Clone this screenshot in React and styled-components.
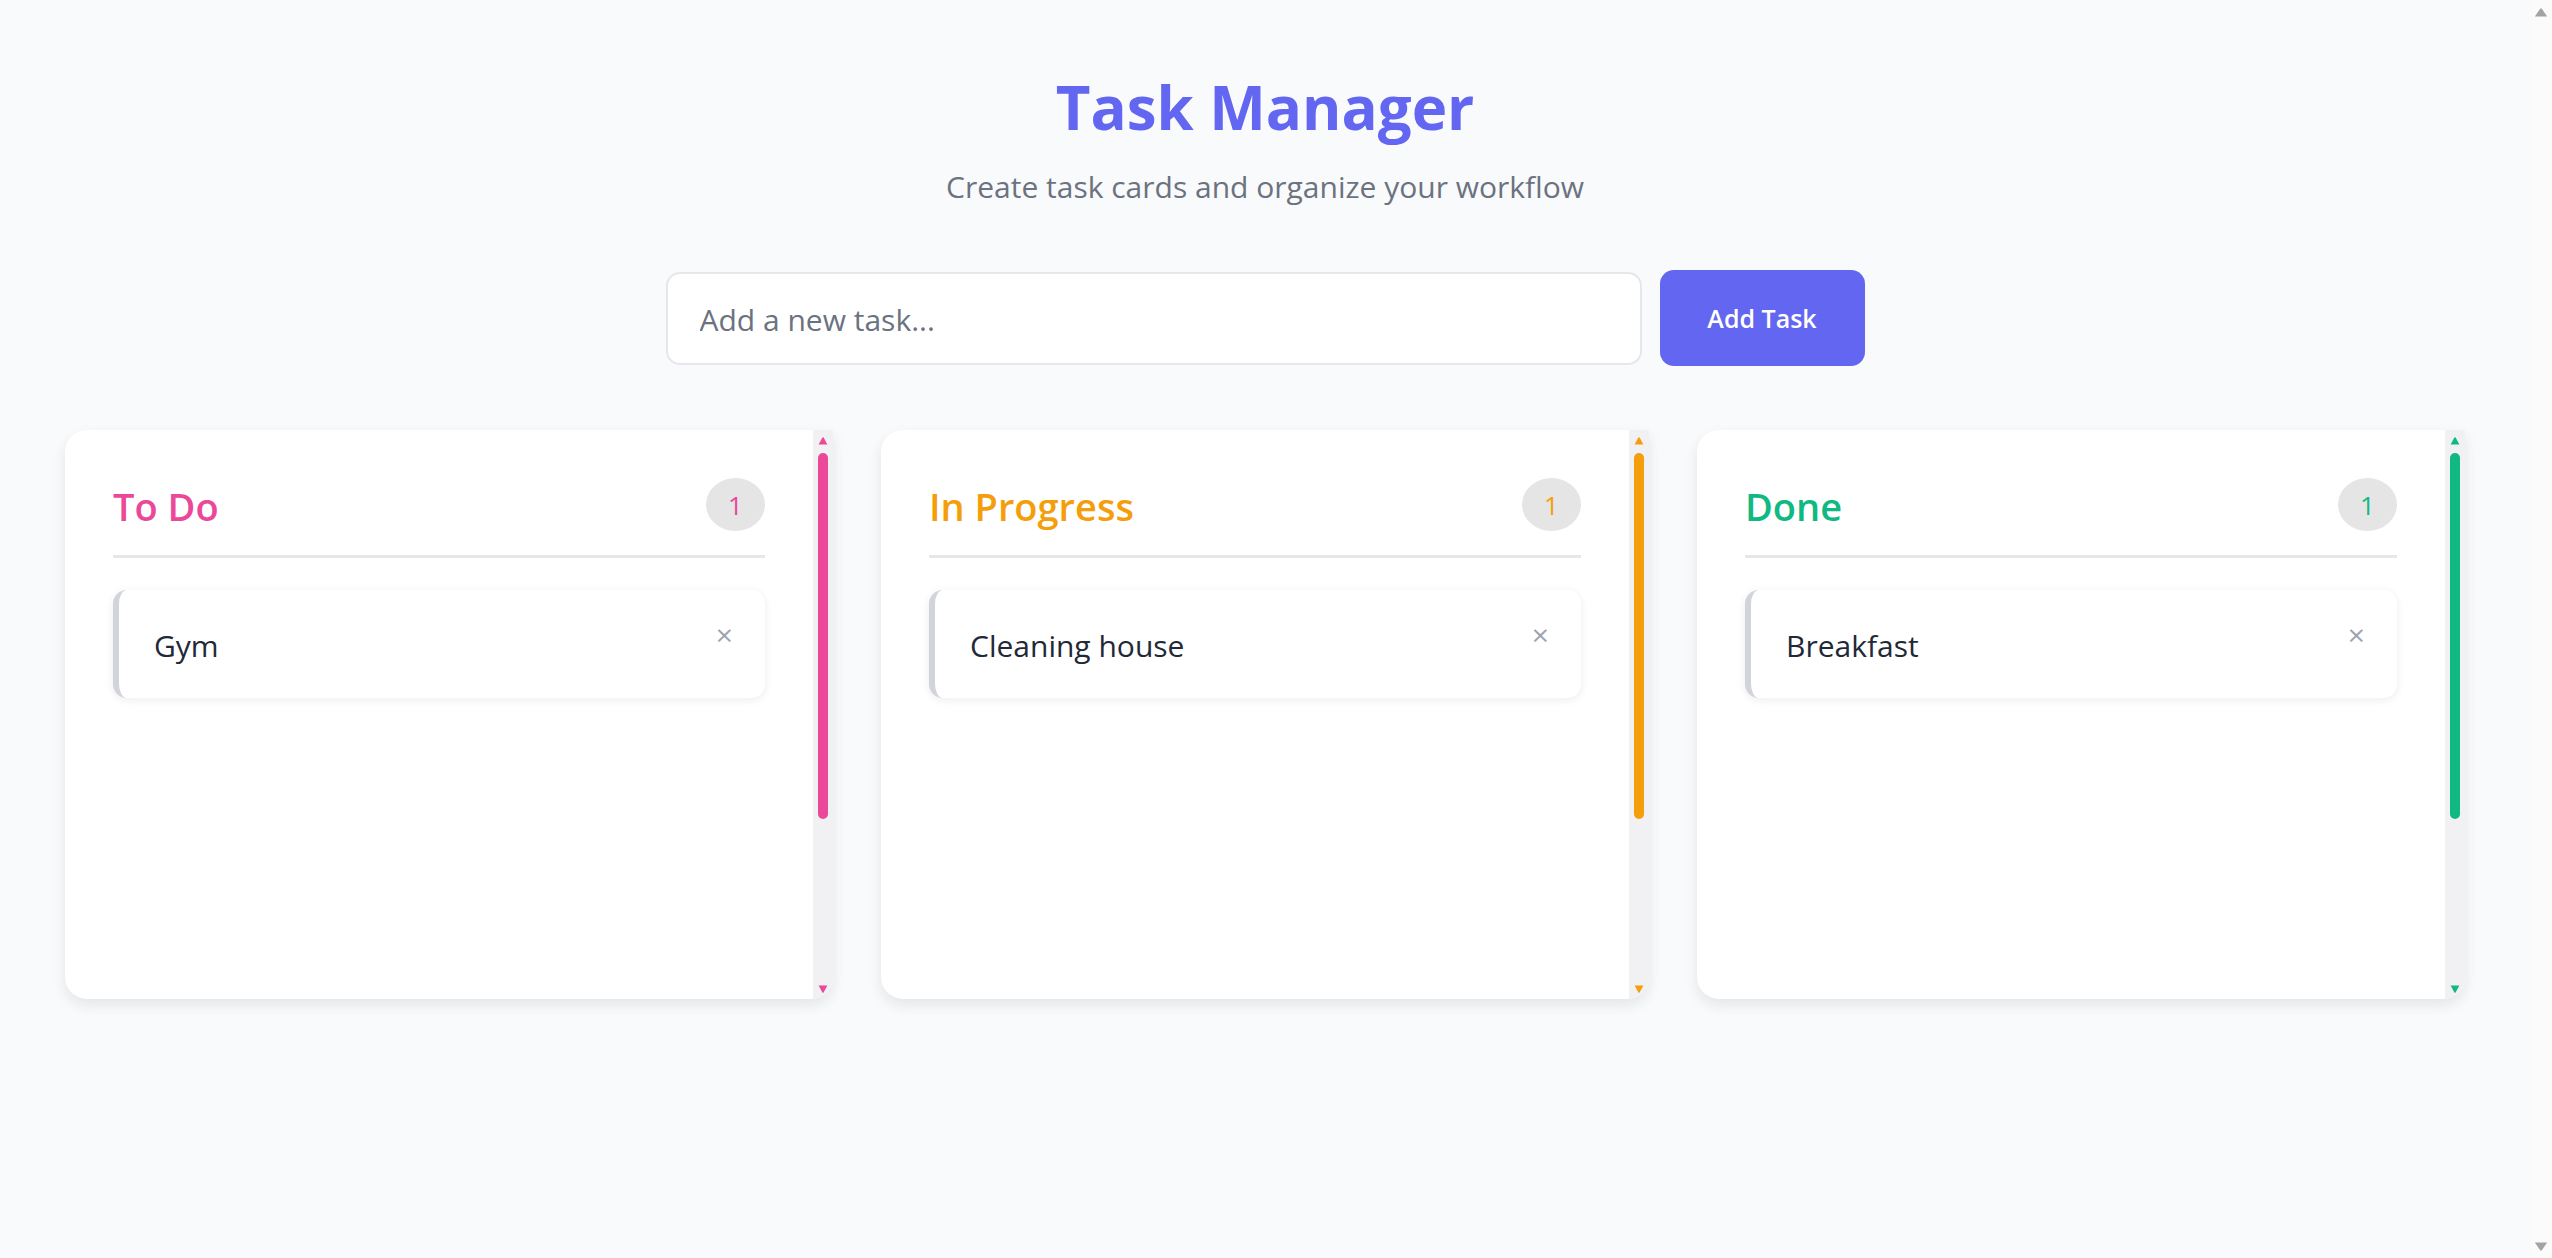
import React, { useState } from 'react'
import styled, { createGlobalStyle } from 'styled-components'

const GlobalStyle = createGlobalStyle`
  html, body {
    margin: 0;
    padding: 0;
    height: 100%;
    overflow: hidden;
  }
  body {
    background: #f9fafb;
    font-family: "Open Sans", "Noto Sans", sans-serif;
  }
  * { box-sizing: border-box; }
`

const Screen = styled.div`
  display: flex;
  height: 100vh;
`

const Page = styled.main`
  flex: 1;
  padding-top: 71px;
  display: flex;
  flex-direction: column;
  align-items: center;
`

const Title = styled.h1`
  margin: 0;
  font-size: 60px;
  line-height: 72px;
  font-weight: 700;
  color: #6366f1;
`

const Subtitle = styled.p`
  margin: 24px 0 0;
  font-size: 30px;
  line-height: 40px;
  color: #6b7280;
`

const AddForm = styled.form`
  margin-top: 63px;
  width: 1199px;
  display: flex;
  align-items: center;
  gap: 18px;
`

const TaskInput = styled.input`
  flex: 1;
  height: 93px;
  padding: 2px 32px 0;
  border: 2px solid #e5e7eb;
  border-radius: 14px;
  background: #fff;
  font-family: inherit;
  font-size: 30px;
  color: #1f2937;
  outline: none;

  &::placeholder {
    color: #6b7280;
  }
`

const AddButton = styled.button`
  width: 205px;
  height: 96px;
  border: none;
  border-radius: 14px;
  background: #6366f1;
  color: #fff;
  font-family: inherit;
  font-size: 25px;
  font-weight: 600;
  cursor: pointer;
`

const Board = styled.section`
  margin-top: 64px;
  width: 2400px;
  display: grid;
  grid-template-columns: repeat(3, 1fr);
  gap: 48px;
`

const Column = styled.div`
  height: 569px;
  display: flex;
  background: #fff;
  border-radius: 22px 0 22px 22px;
  box-shadow: 0 6px 14px rgba(17, 24, 39, 0.09);
  overflow: hidden;
`

const ColumnBody = styled.div`
  flex: 1;
  padding: 48px;
`

const ColumnHeader = styled.div`
  display: flex;
  align-items: center;
  justify-content: space-between;
  padding-bottom: 24px;
  border-bottom: 3px solid #e5e7eb;
`

const ColumnTitle = styled.h2`
  margin: 0;
  padding-top: 3px;
  font-size: 38px;
  line-height: 50px;
  font-weight: 600;
  color: ${p => p.$color};
`

const Count = styled.span`
  width: 59px;
  height: 53px;
  border-radius: 50%;
  background: #e5e5e5;
  display: flex;
  align-items: center;
  justify-content: center;
  font-size: 26px;
  color: ${p => p.$color};
`

const TaskList = styled.ul`
  list-style: none;
  margin: 32px 0 0;
  padding: 0;
`

const TaskCard = styled.li`
  height: 108px;
  display: flex;
  align-items: flex-start;
  justify-content: space-between;
  padding: 35px 28px 31px 35px;
  background: #fff;
  border-left: 6px solid #d1d5db;
  border-radius: 14px;
  box-shadow: 0 2px 8px rgba(17, 24, 39, 0.08);
`

const TaskText = styled.span`
  font-size: 30px;
  line-height: 42px;
  color: #1f2937;
`

const RemoveButton = styled.button`
  margin-top: -9px;
  padding: 4px;
  border: none;
  background: none;
  font-family: inherit;
  font-size: 30px;
  line-height: 1;
  color: #9ca3af;
  cursor: pointer;
`

const Rail = styled.div`
  width: 20px;
  display: flex;
  flex-direction: column;
  align-items: center;
  padding: 7px 0 6px;
  background: #f1f1f3;
  color: ${p => p.$color};
`

const Thumb = styled.div`
  margin-top: 8px;
  width: 10px;
  height: 366px;
  border-radius: 5px;
  background: ${p => p.$color};
`

const RailFill = styled.div`
  flex: 1;
`

const PageRail = styled.div`
  width: 22px;
  display: flex;
  flex-direction: column;
  justify-content: space-between;
  align-items: center;
  padding: 8px 0 7px;
  background: #fbfbfb;
  color: #a3a3a3;
`

const Arrow = ({ down, w = 10, h = 8 }) => (
  <svg width={w} height={h} viewBox="0 0 10 8" preserveAspectRatio="none">
    <path
      d={down ? 'M0.6 0.5 H9.4 L5.6 7.4 Q5 8 4.4 7.4 Z' : 'M0.6 7.5 H9.4 L5.6 0.6 Q5 0 4.4 0.6 Z'}
      fill="currentColor"
    />
  </svg>
)

const columns = [
  { id: 'todo', title: 'To Do', color: '#ec4899' },
  { id: 'progress', title: 'In Progress', color: '#f59e0b' },
  { id: 'done', title: 'Done', color: '#10b981' },
]

export default function App() {
  const [text, setText] = useState('')
  const [tasks, setTasks] = useState([
    { id: 1, text: 'Gym', status: 'todo' },
    { id: 2, text: 'Cleaning house', status: 'progress' },
    { id: 3, text: 'Breakfast', status: 'done' },
  ])

  const addTask = e => {
    e.preventDefault()
    if (!text.trim()) return
    setTasks([...tasks, { id: Date.now(), text: text.trim(), status: 'todo' }])
    setText('')
  }

  const removeTask = id => setTasks(tasks.filter(t => t.id !== id))

  return (
    <Screen>
      <GlobalStyle />
      <Page>
        <Title>Task Manager</Title>
        <Subtitle>Create task cards and organize your workflow</Subtitle>

        <AddForm onSubmit={addTask}>
          <TaskInput
            placeholder="Add a new task..."
            value={text}
            onChange={e => setText(e.target.value)}
          />
          <AddButton type="submit">Add Task</AddButton>
        </AddForm>

        <Board>
          {columns.map(col => {
            const list = tasks.filter(t => t.status === col.id)
            return (
              <Column key={col.id}>
                <ColumnBody>
                  <ColumnHeader>
                    <ColumnTitle $color={col.color}>{col.title}</ColumnTitle>
                    <Count $color={col.color}>{list.length}</Count>
                  </ColumnHeader>
                  <TaskList>
                    {list.map(task => (
                      <TaskCard key={task.id}>
                        <TaskText>{task.text}</TaskText>
                        <RemoveButton onClick={() => removeTask(task.id)}>×</RemoveButton>
                      </TaskCard>
                    ))}
                  </TaskList>
                </ColumnBody>
                <Rail $color={col.color}>
                  <Arrow />
                  <Thumb $color={col.color} />
                  <RailFill />
                  <Arrow down />
                </Rail>
              </Column>
            )
          })}
        </Board>
      </Page>
      <PageRail>
        <Arrow w={14} h={9} />
        <Arrow down w={14} h={9} />
      </PageRail>
    </Screen>
  )
}
